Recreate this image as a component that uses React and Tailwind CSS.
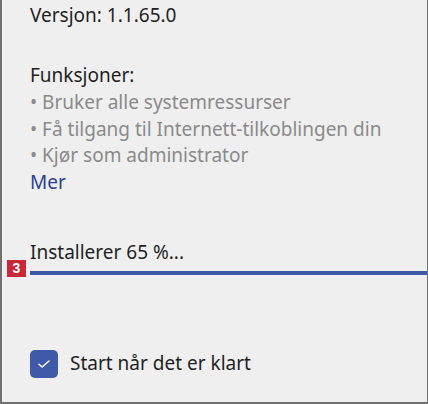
import React from "react";

const features = [
    "Bruker alle systemressurser",
    "Få tilgang til Internett-tilkoblingen din",
    "Kjør som administrator",
];

export default function App() {
    return (
        <div className="w-[428px] h-[404px] bg-[#efefef] border-l-2 border-r border-b-2 border-[#707070] overflow-hidden font-['Noto_Sans',sans-serif] text-[19px] text-[#1f1f1f]">
            <div className="pl-[28px] leading-[27px]">
                <p className="-mt-[25px]">Utgiver: Microsoft</p>
                <p>Versjon: 1.1.65.0</p>

                <p className="mt-[33px]">Funksjoner:</p>
                <ul className="text-[#8a8a8a] leading-[26.5px]">
                    {features.map(f => (
                        <li key={f}>• {f}</li>
                    ))}
                </ul>
                <p className="text-[#2c3f91]">Mer</p>
            </div>

            <div className="relative mt-[43px]">
                <p className="pl-[28px] leading-[27px]">Installerer 65 %...</p>
                <div className="ml-[28px] mt-[5px] h-[4px] bg-[#3f5aa8]" />
                <span className="absolute left-[5px] top-[21px] w-[19px] h-[17px] bg-[#c9283a] text-white text-[14px] leading-[17px] font-bold text-center font-['Liberation_Sans',sans-serif]">
                    3
                </span>
            </div>

            <label className="flex items-center gap-[12px] pl-[28px] mt-[75px]">
                <span className="w-[28px] h-[28px] rounded-[5px] bg-[#3f5aa8] flex items-center justify-center">
                    <svg width="12" height="8" viewBox="0 0 12 8" fill="none">
                        <path d="M1 4.2 L4.2 7 L11 1" stroke="white" strokeWidth="1.5" strokeLinecap="round" strokeLinejoin="round" />
                    </svg>
                </span>
                <span className="leading-[27px]">Start når det er klart</span>
            </label>
        </div>
    );
}
